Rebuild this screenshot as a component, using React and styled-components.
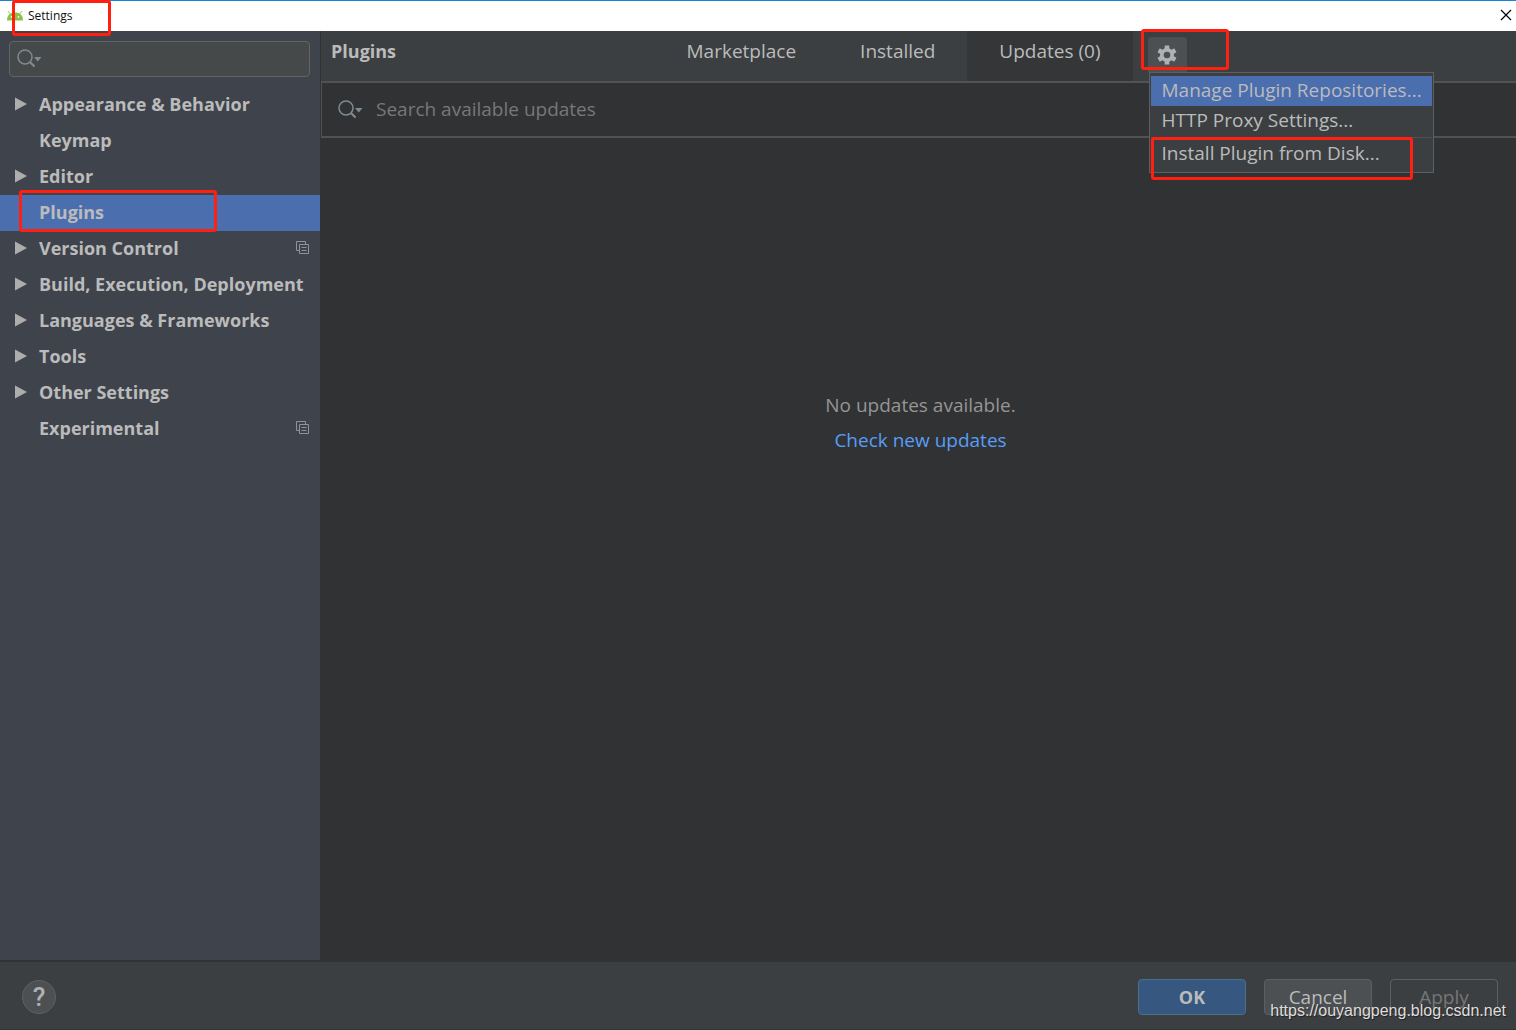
import React from "react";
import styled, { createGlobalStyle, css } from "styled-components";

const GlobalStyle = createGlobalStyle`
  *, *::before, *::after { box-sizing: border-box; }
  body { margin: 0; background: #313234; }
  body, button, input {
    font-family: "Open Sans", "Noto Sans", sans-serif;
    font-size: 19px;
    line-height: 26px;
  }
  button { margin: 0; padding: 0; border: 0; background: none; color: inherit; cursor: pointer; }
`;

const strongText = css`
  font-size: 18px;
  font-weight: 700;
`;

const Dialog = styled.div`
  display: flex;
  flex-direction: column;
  min-height: 100vh;
  color: #bbbbbb;
  background: #313234;
`;

const TitleBar = styled.header`
  display: flex;
  align-items: center;
  justify-content: space-between;
  height: 31px;
  padding: 0 4px 0 7px;
  border-top: 1px solid #1883d7;
  background: #ffffff;
  color: #111111;
`;

const WindowTitle = styled.h1`
  display: flex;
  align-items: center;
  gap: 5px;
  margin: 0;
  font-size: 12px;
  font-weight: 400;
  line-height: 16px;
`;

const CloseButton = styled.button`
  display: flex;
  padding-bottom: 2px;
  color: #000000;
`;

const Anchor = styled.span`
  position: relative;
  display: inline-flex;
`;

const Mark = styled.span`
  position: absolute;
  z-index: 5;
  top: ${(p) => p.$top}px;
  left: ${(p) => p.$left}px;
  width: ${(p) => p.$width}px;
  height: ${(p) => p.$height}px;
  border: 3px solid #ff2011;
  border-radius: 3px;
  pointer-events: none;
`;

const Body = styled.div`
  display: flex;
  flex: 1;
`;

const Sidebar = styled.nav`
  flex: 0 0 320px;
  padding-top: 10px;
  background: #3f434c;
`;

const SidebarSearch = styled.label`
  display: flex;
  align-items: center;
  height: 36px;
  margin: 0 10px 10px 9px;
  padding: 0 7px;
  border: 1px solid #646464;
  border-radius: 4px;
  background: #45494a;
`;

const TextInput = styled.input`
  flex: 1;
  min-width: 0;
  padding: 0 0 2px;
  border: 0;
  outline: 0;
  background: transparent;
  color: #bbbbbb;
  &::placeholder { color: #777879; opacity: 1; }
`;

const Tree = styled.ul`
  margin: 0;
  padding: 0;
  list-style: none;
`;

const TreeItem = styled.li`
  position: relative;
`;

const TreeButton = styled.button`
  display: grid;
  grid-template-columns: 24px 1fr auto;
  align-items: center;
  width: 100%;
  height: 36px;
  padding: 0 10px 2px 15px;
  color: #bbbbbb;
  ${strongText}
  text-align: left;
  white-space: nowrap;
  ${(p) => p.$selected && css`background: #4b6eaf;`}
`;

const Main = styled.main`
  display: flex;
  flex: 1;
  flex-direction: column;
  min-width: 0;
  margin-left: 1px;
`;

const PanelHeader = styled.div`
  display: grid;
  grid-template-columns: 1fr auto 1fr;
  height: 50px;
  padding-left: 4px;
  background: #3c3f41;
`;

const PanelTitle = styled.h2`
  margin: 0;
  padding: 7px 6px;
  ${strongText}
  line-height: 26px;
`;

const TabBar = styled.div`
  display: flex;
`;

const Tab = styled.button`
  display: flex;
  padding: 7px 32px 0;
  white-space: nowrap;
  ${(p) => p.$active && css`background: #353638;`}
`;

const GearArea = styled.div`
  position: relative;
  padding: 6px 0 0 15px;
`;

const GearButton = styled.button`
  display: flex;
  align-items: center;
  justify-content: center;
  width: 39px;
  height: 35px;
  border-radius: 4px 4px 0 0;
  background: #4c5052;
`;

const Menu = styled.div`
  position: absolute;
  z-index: 3;
  top: 41px;
  left: 16px;
  width: 285px;
  padding: 3px 1px;
  border: 1px solid #5d5f60;
  background: #3c3f41;
`;

const MenuItem = styled.button`
  position: relative;
  display: block;
  width: 100%;
  height: 30px;
  padding: 0 11px 2px;
  text-align: left;
  white-space: nowrap;
  ${(p) => p.$active && css`background: #4b6eaf;`}
`;

const MenuSeparator = styled.hr`
  height: 1px;
  margin: 1px 0;
  border: 0;
  background: #515151;
`;

const PluginSearch = styled.label`
  display: flex;
  align-items: center;
  gap: 12px;
  height: 57px;
  padding: 0 17px 0 16px;
  border: solid #515253;
  border-width: 2px 0 2px 1px;
`;

const EmptyState = styled.div`
  display: flex;
  flex: 1;
  flex-direction: column;
  align-items: center;
  gap: 9px;
  padding: 254px 0 0 4px;
  color: #959595;
`;

const UpdateLink = styled.a`
  color: #589df6;
  text-decoration: none;
`;

const Footer = styled.footer`
  position: relative;
  display: flex;
  align-items: center;
  justify-content: space-between;
  height: 70px;
  padding: 2px 18px 0 22px;
  border-top: 2px solid #323334;
  border-bottom: 1px solid #323334;
  background: #3c3f41;
`;

const HelpButton = styled.button`
  display: flex;
  align-items: center;
  justify-content: center;
  width: 34px;
  height: 34px;
  border: 1px solid #5e6162;
  border-radius: 50%;
  background: #4c5052;
  font-family: Roboto, sans-serif;
  font-size: 26px;
  font-weight: 500;
  color: #afb1b3;
`;

const Actions = styled.div`
  display: flex;
  gap: 18px;
`;

const ActionButton = styled.button`
  width: 108px;
  height: 36px;
  border: 1px solid #5e6060;
  border-radius: 4px;
  background: #4c5052;
  ${(p) => p.$primary && css`
    border-color: #4c708c;
    background: #365880;
    ${strongText}
  `}
  &:disabled { background: transparent; color: #777777; }
`;

const Watermark = styled.span`
  position: absolute;
  right: 10px;
  bottom: 6px;
  color: #dddddd;
  font-family: "Liberation Sans", Arial, sans-serif;
  font-size: 16px;
  line-height: 24px;
  text-shadow: 1px 1px 1px #00000080;
  pointer-events: none;
`;

const AndroidIcon = () => (
  <svg width="16" height="12" viewBox="0 0 16 12" aria-hidden="true">
    <path d="M0 10.5C0 5 3.5 2.6 8 2.6s8 2.4 8 7.9Z" fill="#8bc34a" />
    <path d="M.8 1 3.8 4.4M15.2 1 12.2 4.4" stroke="#8bc34a" strokeWidth="1" />
    <circle cx="4.5" cy="6.8" r=".9" fill="#fff" />
    <circle cx="11.5" cy="6.8" r=".9" fill="#fff" />
  </svg>
);

const SearchIcon = () => (
  <svg width="26" height="20" viewBox="0 0 26 20" fill="none" aria-hidden="true">
    <circle cx="8" cy="8" r="7" stroke="#7f8b91" strokeWidth="1.5" />
    <path d="m13 13 4.5 4.5" stroke="#7f8b91" strokeWidth="2.2" />
    <path d="M17 8h7.5l-3.75 4.4Z" fill="#7f8b91" />
  </svg>
);

const ArrowIcon = () => (
  <svg width="12" height="14" viewBox="0 0 12 14" aria-hidden="true">
    <path d="M0 .5v13L12 7Z" fill="#adadad" />
  </svg>
);

const ProjectIcon = () => (
  <svg width="14" height="14" viewBox="0 0 14 14" fill="none" stroke="#8a949c" aria-hidden="true">
    <path d="M3.5 9.5h-3v-9h9v3" />
    <path d="M3.5 3.5h9v9h-9z" />
    <path d="M5.5 6.5h5M5.5 9.5h5" />
  </svg>
);

const GearIcon = () => (
  <svg width="20" height="20" viewBox="0 0 20 20" aria-hidden="true">
    <g fill="#afb1b3">
      {[0, 60, 120].map((angle) => (
        <rect key={angle} x="7.7" y=".4" width="4.6" height="19.2" rx=".4" transform={`rotate(${angle} 10 10)`} />
      ))}
      <circle cx="10" cy="10" r="7" />
    </g>
    <circle cx="10" cy="10" r="3.3" fill="#4c5052" />
  </svg>
);

const CloseIcon = () => (
  <svg width="12" height="12" viewBox="0 0 12 12" fill="none" stroke="currentColor" aria-hidden="true">
    <path d="m1 1 10 10M11 1 1 11" strokeWidth="1.2" />
  </svg>
);

const categories = [
  { name: "Appearance & Behavior", expandable: true },
  { name: "Keymap" },
  { name: "Editor", expandable: true },
  { name: "Plugins", selected: true },
  { name: "Version Control", expandable: true, perProject: true },
  { name: "Build, Execution, Deployment", expandable: true },
  { name: "Languages & Frameworks", expandable: true },
  { name: "Tools", expandable: true },
  { name: "Other Settings", expandable: true },
  { name: "Experimental", perProject: true },
];

const tabs = ["Marketplace", "Installed", "Updates (0)"];

export default function App() {
  return (
    <Dialog>
      <GlobalStyle />
      <TitleBar>
        <Anchor>
          <WindowTitle><AndroidIcon />Settings</WindowTitle>
          <Mark $top={-8} $left={5} $width={99} $height={36} />
        </Anchor>
        <CloseButton aria-label="Close"><CloseIcon /></CloseButton>
      </TitleBar>
      <Body>
        <Sidebar>
          <SidebarSearch>
            <SearchIcon />
            <TextInput type="text" aria-label="Search settings" />
          </SidebarSearch>
          <Tree>
            {categories.map((item) => (
              <TreeItem key={item.name}>
                <TreeButton $selected={item.selected}>
                  <span>{item.expandable && <ArrowIcon />}</span>
                  <span>{item.name}</span>
                  {item.perProject && <ProjectIcon />}
                </TreeButton>
                {item.selected && <Mark $top={-5} $left={19} $width={198} $height={42} />}
              </TreeItem>
            ))}
          </Tree>
        </Sidebar>
        <Main>
          <PanelHeader>
            <PanelTitle>Plugins</PanelTitle>
            <TabBar>
              {tabs.map((tab, i) => <Tab key={tab} $active={i === 2}>{tab}</Tab>)}
              <GearArea>
                <GearButton aria-label="Plugin options"><GearIcon /></GearButton>
                <Mark $top={-2} $left={8} $width={88} $height={41} />
                <Menu>
                  <MenuItem $active>Manage Plugin Repositories...</MenuItem>
                  <MenuItem>HTTP Proxy Settings...</MenuItem>
                  <MenuSeparator />
                  <MenuItem>
                    Install Plugin from Disk...
                    <Mark $top={-2} $left={0} $width={262} $height={43} />
                  </MenuItem>
                </Menu>
              </GearArea>
            </TabBar>
          </PanelHeader>
          <PluginSearch>
            <SearchIcon />
            <TextInput type="text" aria-label="Search available updates" placeholder="Search available updates" />
          </PluginSearch>
          <EmptyState>
            <span>No updates available.</span>
            <UpdateLink href="#updates">Check new updates</UpdateLink>
          </EmptyState>
        </Main>
      </Body>
      <Footer>
        <HelpButton aria-label="Help">?</HelpButton>
        <Actions>
          <ActionButton $primary>OK</ActionButton>
          <ActionButton>Cancel</ActionButton>
          <ActionButton disabled>Apply</ActionButton>
        </Actions>
        <Watermark>https://ouyangpeng.blog.csdn.net</Watermark>
      </Footer>
    </Dialog>
  );
}
